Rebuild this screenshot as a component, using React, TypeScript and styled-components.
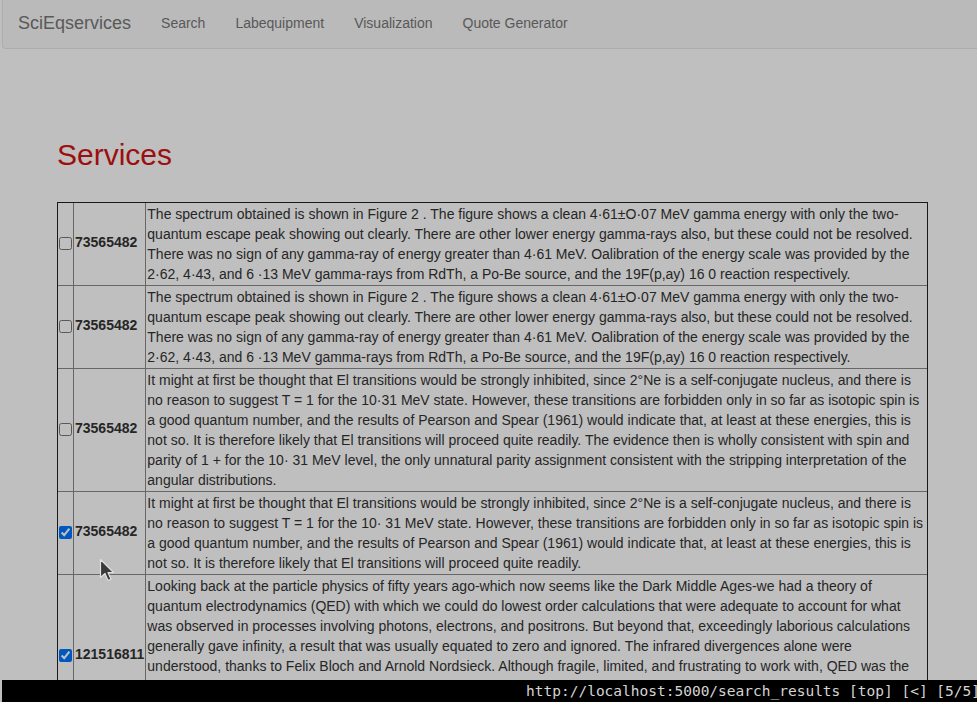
import React from "react";
import styled, { createGlobalStyle } from "styled-components";

const Global = createGlobalStyle`
  html, body { margin: 0; padding: 0; overflow: hidden; }
  body {
    background: #ffffff;
    color: #333333;
    font-family: "Liberation Sans", Arial, Helvetica, sans-serif;
    font-size: 14px;
    line-height: 20px;
  }
  * { box-sizing: border-box; }
`;

const Navbar = styled.nav`
  margin-left: 2px;
  height: 49px;
  padding-bottom: 3px;
  background: #f8f8f8;
  border: 1px solid #e7e7e7;
  border-top: none;
  border-right: none;
  border-bottom-left-radius: 4px;
  display: flex;
  align-items: center;
`;

const Brand = styled.a`
  padding: 0 15px;
  font-size: 18px;
  line-height: 20px;
  color: #777777;
  text-decoration: none;
`;

const NavLink = styled.a`
  padding: 0 15px;
  font-size: 14px;
  line-height: 20px;
  color: #777777;
  text-decoration: none;
`;

const Main = styled.main`
  margin-left: 57px;
`;

const Title = styled.h2`
  margin: 89px 0 31px;
  font-size: 30px;
  line-height: 33px;
  font-weight: 400;
  color: #d21414;
`;

const Table = styled.table`
  width: 871px;
  border-collapse: separate;
  border-spacing: 0;
  border: 1px solid #222222;
`;

const Row = styled.tr`
  &:not(:first-child) > td {
    border-top: 1px solid #8a8a8a;
  }
`;

const Cell = styled.td<{ $first?: boolean }>`
  padding: 1px;
  vertical-align: middle;
  border-left: ${(p) => (p.$first ? "none" : "1px solid #8a8a8a")};
`;

const CheckCell = styled(Cell)`
  padding-bottom: 3px;
`;

const IdCell = styled(Cell)`
  font-weight: 700;
  white-space: nowrap;
  padding-bottom: 6px;
`;

const Check = styled.input`
  display: block;
  margin: 0;
  width: 13px;
  height: 13px;
`;

const Overlay = styled.div`
  position: fixed;
  inset: 0;
  background: rgba(0, 0, 0, 0.25);
  z-index: 10;
  pointer-events: none;
`;

const StatusBar = styled.div`
  position: fixed;
  left: 2px;
  right: 0;
  bottom: 0;
  height: 22px;
  background: #000000;
  z-index: 20;
  display: flex;
  justify-content: flex-end;
  overflow: hidden;
`;

const StatusText = styled.span`
  font-family: "DejaVu Sans Mono", monospace;
  font-size: 14.5px;
  line-height: 22px;
  color: #d4d4d4;
  white-space: pre;
  margin-right: -3px;
`;

const Cursor = styled.svg`
  position: fixed;
  left: 99px;
  top: 558px;
  z-index: 30;
`;

const spectrum =
  "The spectrum obtained is shown in Figure 2 . The figure shows a clean 4·61±O·07 MeV gamma energy with only the two-quantum escape peak showing out clearly. There are other lower energy gamma-rays also, but these could not be resolved. There was no sign of any gamma-ray of energy greater than 4·61 MeV. Oalibration of the energy scale was provided by the 2·62, 4·43, and 6 ·13 MeV gamma-rays from RdTh, a Po-Be source, and the 19F(p,ay) 16 0 reaction respectively.";

const rows = [
  { id: "73565482", checked: false, text: spectrum },
  { id: "73565482", checked: false, text: spectrum },
  {
    id: "73565482",
    checked: false,
    text: "It might at first be thought that El transitions would be strongly inhibited, since 2°Ne is a self-conjugate nucleus, and there is no reason to suggest T = 1 for the 10·31 MeV state. However, these transitions are forbidden only in so far as isotopic spin is a good quantum number, and the results of Pearson and Spear (1961) would indicate that, at least at these energies, this is not so. It is therefore likely that El transitions will proceed quite readily. The evidence then is wholly consistent with spin and parity of 1 + for the 10· 31 MeV level, the only unnatural parity assignment consistent with the stripping interpretation of the angular distributions.",
  },
  {
    id: "73565482",
    checked: true,
    text: "It might at first be thought that El transitions would be strongly inhibited, since 2°Ne is a self-conjugate nucleus, and there is no reason to suggest T = 1 for the 10· 31 MeV state. However, these transitions are forbidden only in so far as isotopic spin is a good quantum number, and the results of Pearson and Spear (1961) would indicate that, at least at these energies, this is not so. It is therefore likely that El transitions will proceed quite readily.",
  },
  {
    id: "121516811",
    checked: true,
    text: "Looking back at the particle physics of fifty years ago-which now seems like the Dark Middle Ages-we had a theory of quantum electrodynamics (QED) with which we could do lowest order calculations that were adequate to account for what was observed in processes involving photons, electrons, and positrons. But beyond that, exceedingly laborious calculations generally gave infinity, a result that was usually equated to zero and ignored. The infrared divergences alone were understood, thanks to Felix Bloch and Arnold Nordsieck. Although fragile, limited, and frustrating to work with, QED was the best theory we had, and it was the only quantum field theory that anyone took seriously. Its renormalization, achieved in the late 1940s by Tomonaga, Schwinger, Feynman and Dyson, transformed it into a precise and powerful tool, and it became the model for the theories that followed.",
  },
];

export default function App() {
  return (
    <>
      <Global />
      <Navbar>
        <Brand href="#">SciEqservices</Brand>
        <NavLink href="#">Search</NavLink>
        <NavLink href="#">Labequipment</NavLink>
        <NavLink href="#">Visualization</NavLink>
        <NavLink href="#">Quote Generator</NavLink>
      </Navbar>
      <Main>
        <Title>Services</Title>
        <Table>
          <tbody>
            {rows.map((r, i) => (
              <Row key={i}>
                <CheckCell $first>
                  <Check type="checkbox" defaultChecked={r.checked} />
                </CheckCell>
                <IdCell>{r.id}</IdCell>
                <Cell>{r.text}</Cell>
              </Row>
            ))}
          </tbody>
        </Table>
      </Main>
      <Overlay />
      <StatusBar>
        <StatusText>http://localhost:5000/search_results [top] [&lt;] [5/5]</StatusText>
      </StatusBar>
      <Cursor width="16" height="26" viewBox="0 0 16 26">
        <path
          d="M1.5 1.5 L1.5 19.5 L6 15.5 L9 22.5 L12 21.2 L9 14.5 L14.5 14.5 Z"
          fill="#3a3a3a"
          stroke="#e0e0e0"
          strokeWidth="1.2"
          strokeLinejoin="round"
        />
      </Cursor>
    </>
  );
}
